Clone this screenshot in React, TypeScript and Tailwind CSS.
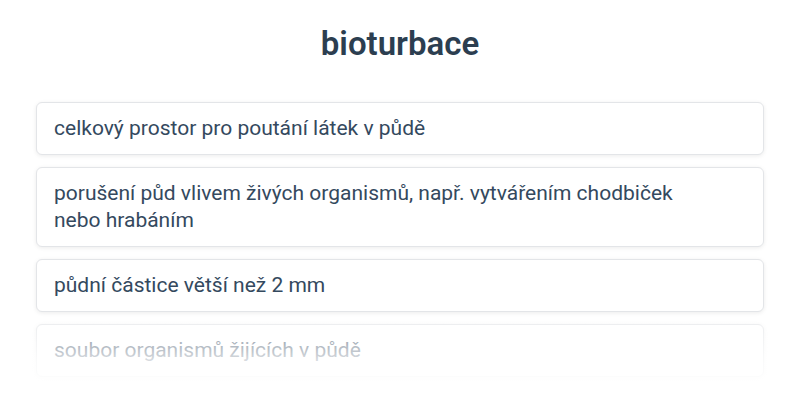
import React from "react";

const options = [
  "celkový prostor pro poutání látek v půdě",
  "porušení půd vlivem živých organismů, např. vytvářením chodbiček nebo hrabáním",
  "půdní částice větší než 2 mm",
  "soubor organismů žijících v půdě",
];

export default function App() {
  return (
    <div
      className="relative h-[400px] w-[800px] overflow-hidden bg-white text-[#2c3e50]"
      style={{ fontFamily: "Roboto, 'Noto Sans', sans-serif" }}
    >
      <h1 className="pt-[24px] text-center text-[33px] font-semibold leading-[40px]">
        bioturbace
      </h1>

      <div className="mt-[38px] flex flex-col gap-3 px-9">
        {options.map((text) => (
          <div
            key={text}
            className="rounded-md border border-[#e3e5e8] bg-white px-[17px] py-3 text-[21px] leading-[27px] text-[#34495e] shadow-[0_1px_4px_rgba(0,0,0,0.08)]"
          >
            <span className="block max-w-[660px]">{text}</span>
          </div>
        ))}
      </div>

      {/* fade out at the bottom */}
      <div className="pointer-events-none absolute inset-x-0 bottom-0 h-[80px] bg-gradient-to-b from-white/30 via-white/80 to-white" />
    </div>
  );
}
